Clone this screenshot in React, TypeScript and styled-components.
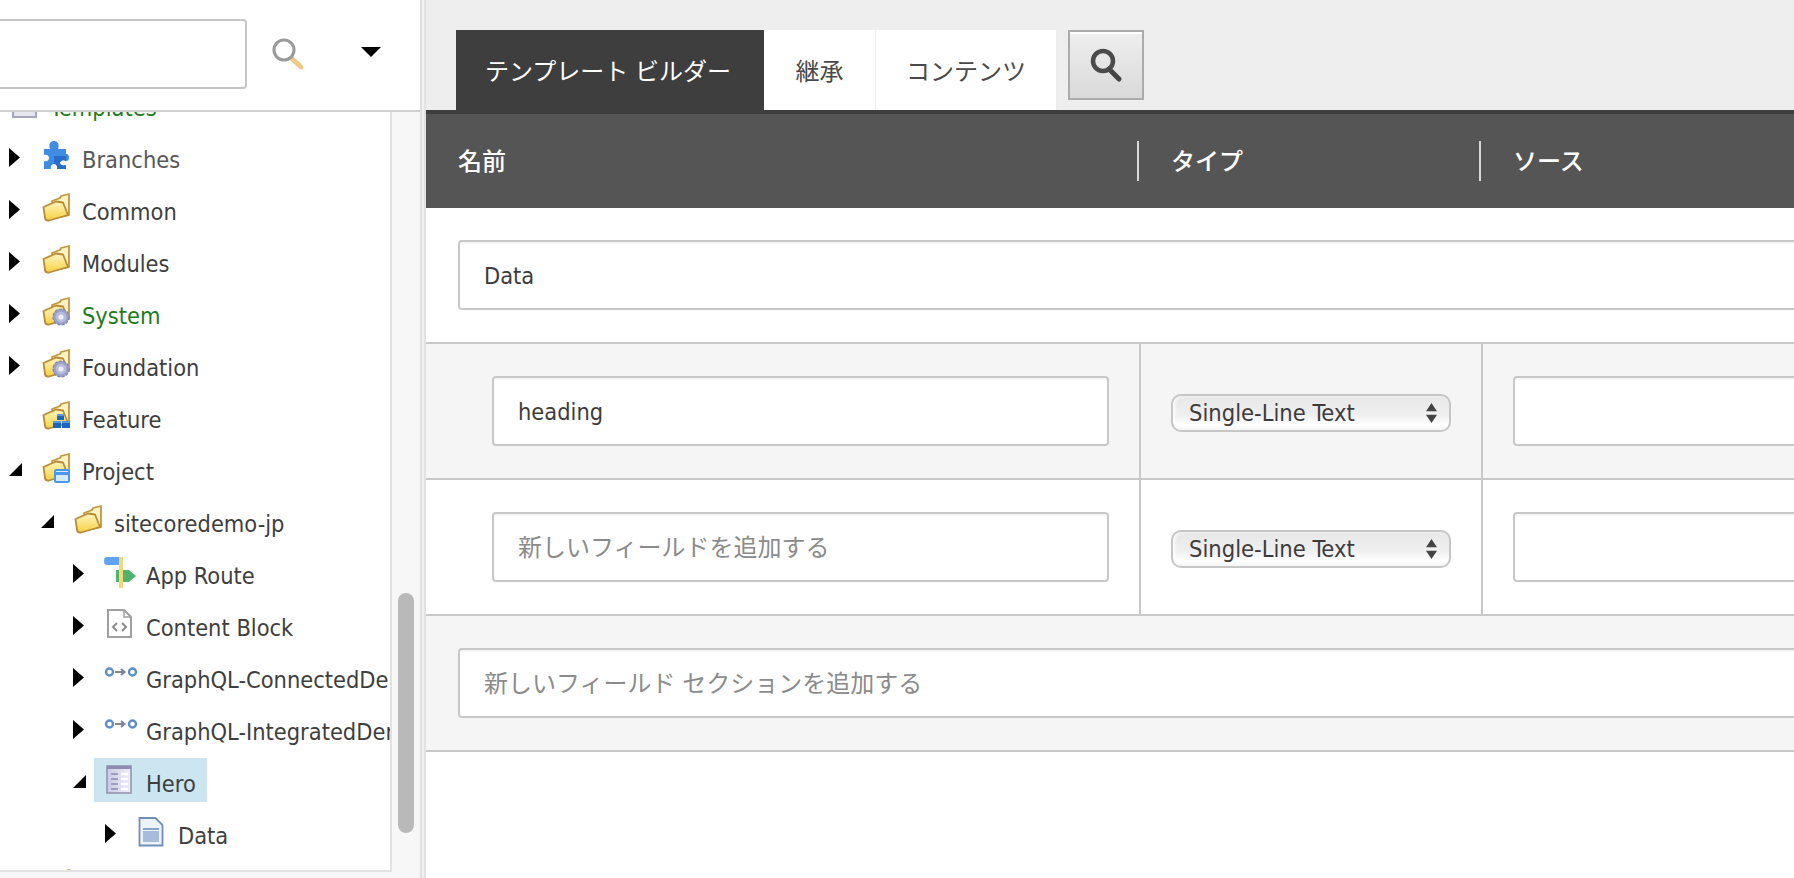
import React from "react";
import styled, { createGlobalStyle } from "styled-components";

const FONT = `"DejaVu Sans Condensed", "Noto Sans CJK JP", sans-serif`;

const Global = createGlobalStyle`
  html, body { margin: 0; padding: 0; background: #fff; overflow: hidden; }
  * { box-sizing: border-box; }
`;

const Page = styled.div`
  width: 1794px;
  height: 878px;
  display: flex;
  overflow: hidden;
  font-family: ${FONT};
  color: #3c3c3c;
  background: #fff;
`;

/* ---------- left column ---------- */
const Side = styled.aside`
  width: 420px;
  flex: none;
  display: flex;
  flex-direction: column;
  background: #f7f7f7;
`;
const SearchBar = styled.div`
  height: 112px;
  flex: none;
  display: flex;
  align-items: center;
  background: #fff;
  border-bottom: 2px solid #cfcfcf;
  position: relative;
  z-index: 1;
`;
const SearchInput = styled.input`
  width: 267px;
  height: 70px;
  margin: -2px 0 0 -20px;
  border: 2px solid #c6c6c6;
  border-radius: 4px;
  background: #fff;
  flex: none;
`;
const LensButton = styled.div`
  margin: -2px 0 0 24px;
  width: 34px;
  height: 34px;
  flex: none;
`;
const MenuCaret = styled.div`
  margin: -6px 0 0 56px;
  width: 0;
  height: 0;
  border-left: 10px solid transparent;
  border-right: 10px solid transparent;
  border-top: 10px solid #000;
  flex: none;
`;
const TreeWrap = styled.div`
  flex: 1;
  display: flex;
  min-height: 0;
`;
const TreePane = styled.div`
  width: 392px;
  height: 760px;
  flex: none;
  overflow: hidden;
  background: #fff;
  border-right: 2px solid #e2e2e2;
  border-bottom: 2px solid #e2e2e2;
`;
const TreeList = styled.div`
  margin-top: -32px;
`;
const TreeRow = styled.div<{ $depth: number }>`
  height: 52px;
  display: flex;
  align-items: center;
  white-space: nowrap;
  margin-left: ${(p) => p.$depth * 32 + 8}px;
`;
const Twist = styled.div`
  width: 34px;
  height: 52px;
  flex: none;
  display: flex;
  align-items: center;
  padding: 0 0 2px 1px;
`;
const Node = styled.div<{ $selected?: boolean }>`
  display: flex;
  align-items: center;
  height: 44px;
  margin: -4px 0 0 -12px;
  padding: 0 11px 0 12px;
  background: ${(p) => (p.$selected ? "#cbe5f1" : "transparent")};
`;
const NodeIcon = styled.div`
  width: 28px;
  height: 30px;
  flex: none;
  margin-right: 12px;
  filter: blur(0.45px);
`;
const NodeLabel = styled.span<{ $tone?: string }>`
  font-size: 23.4px;
  line-height: 30px;
  margin-top: 8px;
  color: ${(p) => p.$tone || "#3e3e3e"};
`;
const ScrollTrack = styled.div`
  width: 28px;
  flex: none;
  background: #f7f7f7;
  padding: 481px 6px 0 6px;
`;
const ScrollThumb = styled.div`
  width: 16px;
  height: 240px;
  background: #b9b9b9;
  border-radius: 8px;
`;
const Splitter = styled.div`
  width: 6px;
  flex: none;
  background: linear-gradient(90deg, #e0e0e0 0 2px, #f0f0f0 2px 4px, #e2e2e2 4px 6px);
`;

/* ---------- right column ---------- */
const Main = styled.main`
  flex: 1;
  min-width: 0;
  display: flex;
  flex-direction: column;
  overflow: hidden;
  background: #fff;
`;
const TabBar = styled.div`
  height: 110px;
  flex: none;
  display: flex;
  align-items: flex-start;
  padding: 30px 0 0 30px;
  background: #eeeeee;
`;
const Tab = styled.div<{ $active?: boolean; $w: number }>`
  width: ${(p) => p.$w}px;
  height: 80px;
  flex: none;
  display: flex;
  align-items: center;
  justify-content: center;
  padding: 0 ${(p) => (p.$active ? 4 : 0)}px 2px 0;
  font-size: 24px;
  white-space: nowrap;
  background: ${(p) => (p.$active ? "#3e3e3e" : "#fff")};
  color: ${(p) => (p.$active ? "#fff" : "#4a4a4a")};
  border-right: ${(p) => (p.$active ? "0" : "1px solid #ececec")};
`;
const FindButton = styled.div`
  width: 76px;
  height: 70px;
  flex: none;
  margin-left: 11px;
  display: flex;
  align-items: center;
  justify-content: center;
  border: 2px solid #ababab;
  box-shadow: inset 0 2px 0 #fff;
  background: linear-gradient(180deg, #efefef, #d9d9d9);
`;
const HeadRow = styled.div`
  height: 98px;
  flex: none;
  display: grid;
  grid-template-columns: 711px 342px 1fr;
  align-items: center;
  background: #555555;
  border-top: 4px solid #3e3e3e;
  color: #fff;
  font-size: 24px;
  font-weight: 500;
`;
const HeadCell = styled.div<{ $rule?: boolean }>`
  height: 40px;
  line-height: 42px;
  padding-left: 32px;
  border-left: ${(p) => (p.$rule ? "2px solid #d8d8d8" : "0")};
`;
const Section = styled.div<{ $gray?: boolean }>`
  height: 136px;
  flex: none;
  display: flex;
  align-items: center;
  padding-left: 32px;
  background: ${(p) => (p.$gray ? "#f5f5f5" : "#fff")};
  border-bottom: 2px solid #c8c8c8;
`;
const Field = styled.input`
  height: 70px;
  padding: 2px 0 0 24px;
  border: 2px solid #c8c8c8;
  border-radius: 4px;
  background: #fff;
  font-family: ${FONT};
  font-size: 23.4px;
  color: #3c3c3c;
  outline: none;
  box-shadow: inset 0 2px 2px rgba(0, 0, 0, 0.04);
  &::placeholder { color: #8b8b8b; opacity: 1; font-size: 24px; }
`;
const SectionField = styled(Field)`
  flex: none;
  width: 1400px;
`;
const Row = styled.div<{ $gray?: boolean }>`
  height: 136px;
  flex: none;
  display: grid;
  grid-template-columns: 715px 342px 1fr;
  background: ${(p) => (p.$gray ? "#f5f5f5" : "#fff")};
  border-bottom: 2px solid #c8c8c8;
`;
const Cell = styled.div<{ $pad: number }>`
  display: flex;
  align-items: center;
  padding-left: ${(p) => p.$pad}px;
  border-right: 2px solid #c8c8c8;
  &:last-child { border-right: 0; }
`;
const NameField = styled(Field)`
  width: 617px;
  flex: none;
`;
const SourceField = styled(Field)`
  width: 400px;
  flex: none;
`;
const TypeSelect = styled.div`
  width: 280px;
  height: 38px;
  flex: none;
  display: flex;
  align-items: center;
  justify-content: space-between;
  padding: 0 12px 0 16px;
  margin: 4px 0 0 1px;
  border: 2px solid #c6c6c6;
  border-radius: 10px;
  font-size: 23.5px;
  background: linear-gradient(180deg, #e8e8e8 0%, #efefef 55%, #ffffff 85%, #f4f4f4 100%);
  box-shadow: inset 2px 0 3px rgba(255, 255, 255, 0.9);
`;

/* ---------- drawings ---------- */
const ArrowRight = () => (
  <svg width="11" height="19" viewBox="0 0 11 19"><path d="M0 0 11 9.5 0 19z" fill="#000" /></svg>
);
const ArrowDown = () => (
  <svg width="13" height="13" viewBox="0 0 13 13"><path d="M13 0v13H0z" fill="#000" /></svg>
);
const Folder = ({ children }: { children?: React.ReactNode }) => (
  <svg width="28" height="30" viewBox="0 0 28 30">
    <defs>
      <linearGradient id="fl" x1="0" y1="0" x2="0" y2="1">
        <stop offset="0" stopColor="#fff6bd" />
        <stop offset="1" stopColor="#f6d043" />
      </linearGradient>
    </defs>
    <path d="M10 8 18 5 19 3l8-2v21L12 25z" fill="#fdf3c4" stroke="#c2963f" strokeWidth="1.800" strokeLinejoin="round" />
    <path d="M1.500 14 14 8.500l7 1L26 22 7 27.500Q3.500 28 3 25z" fill="url(#fl)" stroke="#b98a35" strokeWidth="1.800" strokeLinejoin="round" />
    {children}
  </svg>
);
const Gear = () => (
  <g>
    <circle cx="19" cy="20" r="8" fill="#9aa0c8" stroke="#7f85ad" strokeWidth="1.200" strokeDasharray="3 1.400" />
    <circle cx="19" cy="20" r="5.400" fill="#b8bcdc" />
    <circle cx="19" cy="20" r="2.600" fill="#eeeef8" />
  </g>
);
const GearFolder = () => <Folder><Gear /></Folder>;
const BlockFolder = () => (
  <Folder>
    <path d="M15 13h7v6h-7z M11 20h8v7h-8z M20 20h8v7h-8z" fill="#1d63c0" />
    <path d="M15 13h7v2h-7z M11 20h8v2h-8z M20 20h8v2h-8z" fill="#5a97e6" />
  </Folder>
);
const WindowFolder = () => (
  <Folder>
    <rect x="13" y="17" width="14" height="12" rx="1.500" fill="#d7e9ff" stroke="#4a97ef" strokeWidth="2" />
    <path d="M13 19h14v3H13z" fill="#4a97ef" />
  </Folder>
);
const Puzzle = () => (
  <svg width="28" height="30" viewBox="0 0 28 30">
    <path d="M2 8h6c-2-5 1-8 4-8s6 3 4 8h8v5c4-1 4 8 0 7-3-2-6 0-6 2s3 3 6 2v4H15c1-3-1-5-3-5s-4 2-3 5H2v-8c3 1 5-1 5-3s-2-4-5-3z" fill="#3f8ce2" />
    <path d="M15 28c1-3-1-5-3-5v-8h12v5c-3-2-6 0-6 2s3 3 6 2v4z" fill="#1f5fbf" opacity=".7" />
  </svg>
);
const Route = () => (
  <svg width="32" height="32" viewBox="0 0 32 32" style={{ marginLeft: -2 }}>
    <path d="M3 0h16v8H3Q0 8 0 4T3 0z" fill="#5fa4f2" />
    <path d="M12 13h13l7 6-7 6H12z" fill="#4fb36d" />
    <rect x="15" y="0" width="4" height="31" fill="#f4d878" />
  </svg>
);
const CodeDoc = () => (
  <svg width="28" height="30" viewBox="0 0 28 30" fill="none" stroke="#a0a0a0">
    <path d="M2 1h16l7 7v20H2z" strokeWidth="2" fill="#fff" />
    <path d="M18 1v7h7" strokeWidth="1.500" />
    <path d="M11 14l-4 4 4 4M16 14l4 4-4 4" strokeWidth="2" stroke="#8b8b8b" />
  </svg>
);
const Link = () => (
  <svg width="34" height="30" viewBox="0 0 34 30" fill="none" style={{ marginLeft: -2 }}>
    <circle cx="5.500" cy="11" r="3.500" stroke="#5f8fc8" strokeWidth="2.400" />
    <circle cx="28.500" cy="11" r="3.500" stroke="#5f8fc8" strokeWidth="2.400" />
    <path d="M11 11h9M17 8l3.500 3-3.500 3" stroke="#7c8696" strokeWidth="2" />
  </svg>
);
const FormDoc = () => (
  <svg width="26" height="30" viewBox="0 0 26 30">
    <defs>
      <linearGradient id="fd" x1="0" y1="0" x2="1" y2="0">
        <stop offset="0" stopColor="#c9c9e6" />
        <stop offset="1" stopColor="#eeeef6" />
      </linearGradient>
    </defs>
    <rect x="1" y="1" width="24" height="27" fill="url(#fd)" stroke="#9595b0" strokeWidth="1.600" />
    <rect x="1" y="1" width="24" height="3" fill="#8c8cb0" />
    <path d="M5 9h7M5 14h7M5 19h7M5 24h7" stroke="#8a8aa6" strokeWidth="1.600" />
    <path d="M15 9h7M15 14h7M15 19h7M15 24h7" stroke="#fff" strokeWidth="2.600" />
  </svg>
);
const DataDoc = () => (
  <svg width="26" height="30" viewBox="0 0 26 30">
    <path d="M1.500 1h16l7 7v20.500H1.500z" fill="#eef3fa" stroke="#6f8fb8" strokeWidth="1.800" />
    <rect x="5" y="14" width="16" height="11" fill="#a9bbdc" />
    <path d="M5 12h16" stroke="#6f8fb8" strokeWidth="1.600" />
  </svg>
);
const TemplateIcon = () => (
  <svg width="28" height="30" viewBox="0 0 28 30">
    <rect x="3" y="1" width="23" height="27" fill="#e6e6ee" stroke="#a6a6bc" strokeWidth="2" />
  </svg>
);
const Lens = () => (
  <svg width="34" height="34" viewBox="0 0 34 34" fill="none">
    <path d="M19 20l11 10" stroke="#f0c987" strokeWidth="5" strokeLinecap="round" />
    <circle cx="13" cy="13" r="10" stroke="#9a9a9a" strokeWidth="3" fill="#fff" />
  </svg>
);
const DarkLens = () => (
  <svg width="34" height="36" viewBox="0 0 34 36" fill="none">
    <path d="M20 22l10 10" stroke="#444" strokeWidth="5" strokeLinecap="round" />
    <circle cx="14" cy="14" r="10" stroke="#4a4a4a" strokeWidth="4.500" />
  </svg>
);
const Spinner = () => (
  <svg width="11" height="22" viewBox="0 0 12 22"><path d="M6 0l6 9H0zM6 22l-6-9h12z" fill="#444" /></svg>
);

type TreeItem = {
  depth: number;
  label: string;
  icon: React.ReactNode;
  open?: boolean;
  leaf?: boolean;
  tone?: string;
  selected?: boolean;
};

const GREEN = "#1f7a1c";
const tree: TreeItem[] = [
  { depth: -1, label: "Templates", icon: <TemplateIcon />, leaf: true, tone: GREEN },
  { depth: 0, label: "Branches", icon: <Puzzle />, tone: "#585858" },
  { depth: 0, label: "Common", icon: <Folder /> },
  { depth: 0, label: "Modules", icon: <Folder /> },
  { depth: 0, label: "System", icon: <GearFolder />, tone: GREEN },
  { depth: 0, label: "Foundation", icon: <GearFolder /> },
  { depth: 0, label: "Feature", icon: <BlockFolder />, leaf: true },
  { depth: 0, label: "Project", icon: <WindowFolder />, open: true },
  { depth: 1, label: "sitecoredemo-jp", icon: <Folder />, open: true },
  { depth: 2, label: "App Route", icon: <Route /> },
  { depth: 2, label: "Content Block", icon: <CodeDoc /> },
  { depth: 2, label: "GraphQL-ConnectedDemo", icon: <Link /> },
  { depth: 2, label: "GraphQL-IntegratedDemo", icon: <Link /> },
  { depth: 2, label: "Hero", icon: <FormDoc />, open: true, selected: true },
  { depth: 3, label: "Data", icon: <DataDoc /> },
  { depth: 0, label: "", icon: <Folder />, leaf: true },
];

const TypeBox = () => (
  <TypeSelect>
    <span>Single-Line Text</span>
    <Spinner />
  </TypeSelect>
);

export default function App() {
  return (
    <Page>
      <Global />
      <Side>
        <SearchBar>
          <SearchInput readOnly />
          <LensButton><Lens /></LensButton>
          <MenuCaret />
        </SearchBar>
        <TreeWrap>
          <TreePane>
            <TreeList>
              {tree.map((t, i) => (
                <TreeRow key={i} $depth={t.depth}>
                  <Twist>{t.leaf ? null : t.open ? <ArrowDown /> : <ArrowRight />}</Twist>
                  <Node $selected={t.selected}>
                    <NodeIcon>{t.icon}</NodeIcon>
                    <NodeLabel $tone={t.tone}>{t.label}</NodeLabel>
                  </Node>
                </TreeRow>
              ))}
            </TreeList>
          </TreePane>
          <ScrollTrack><ScrollThumb /></ScrollTrack>
        </TreeWrap>
      </Side>
      <Splitter />
      <Main>
        <TabBar>
          <Tab $active $w={308}>テンプレート ビルダー</Tab>
          <Tab $w={112}>継承</Tab>
          <Tab $w={181}>コンテンツ</Tab>
          <FindButton><DarkLens /></FindButton>
        </TabBar>
        <HeadRow>
          <HeadCell>名前</HeadCell>
          <HeadCell $rule>タイプ</HeadCell>
          <HeadCell $rule>ソース</HeadCell>
        </HeadRow>
        <Section>
          <SectionField defaultValue="Data" readOnly />
        </Section>
        <Row $gray>
          <Cell $pad={66}><NameField defaultValue="heading" readOnly /></Cell>
          <Cell $pad={29}><TypeBox /></Cell>
          <Cell $pad={30}><SourceField readOnly /></Cell>
        </Row>
        <Row>
          <Cell $pad={66}><NameField placeholder="新しいフィールドを追加する" readOnly /></Cell>
          <Cell $pad={29}><TypeBox /></Cell>
          <Cell $pad={30}><SourceField readOnly /></Cell>
        </Row>
        <Section $gray>
          <SectionField placeholder="新しいフィールド セクションを追加する" readOnly />
        </Section>
      </Main>
    </Page>
  );
}
